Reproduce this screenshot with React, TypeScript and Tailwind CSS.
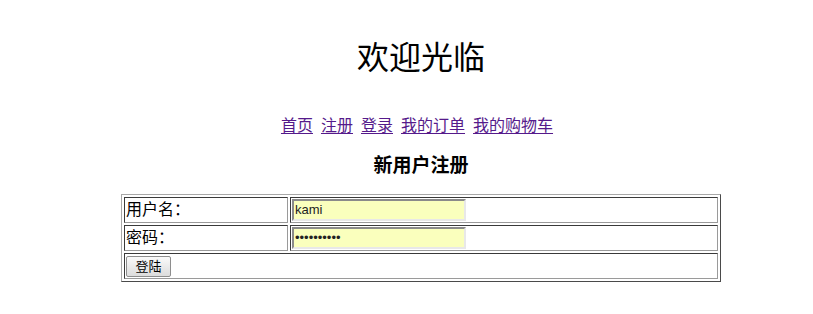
import React from 'react';

const links = ['首页', '注册', '登录', '我的订单', '我的购物车'];

const cellBorder =
  'border border-t-[#3a3a3a] border-l-[#3a3a3a] border-r-[#9a9a9a] border-b-[#9a9a9a] p-px h-[26px] align-middle';

const inputCls =
  'block w-[174px] h-[22px] bg-[#faffbd] border-2 border-t-[#8a8a8a] border-l-[#8a8a8a] border-r-[#e8e8e8] border-b-[#e8e8e8] px-[1px] text-[13px] text-[#222] outline-none';

const App: React.FC = () => {
  return (
    <div
      className="w-[842px] min-h-[314px] bg-white text-black text-center"
      style={{ fontFamily: '"Liberation Serif", "Noto Sans CJK SC", serif' }}
    >
      {/* 标题 */}
      <div className="pt-[38px] text-[32px] leading-[40px] font-normal">欢迎光临</div>

      {/* 导航 */}
      <div className="mt-[38px] text-[16px] leading-[20px] flex justify-center gap-[8px] pr-[8px]">
        {links.map((l) => (
          <a key={l} href="#" className="text-[#551a8b] underline underline-offset-2">
            {l}
          </a>
        ))}
      </div>

      <div className="mt-[19px] text-[19px] leading-[22px] font-bold">新用户注册</div>

      {/* 表单 */}
      <table className="mx-auto mt-[17px] w-[600px] border-separate border-spacing-[2px] border border-t-[#a8a8a8] border-l-[#a8a8a8] border-r-[#4a4a4a] border-b-[#4a4a4a] text-left text-[16px] leading-[22px]">
        <tbody>
          <tr>
            <td className={`${cellBorder} w-[164px]`}>用户名：</td>
            <td className={cellBorder}>
              <input
                className={inputCls}
                defaultValue="kami"
                style={{ fontFamily: '"Liberation Sans", Arial, sans-serif' }}
              />
            </td>
          </tr>
          <tr>
            <td className={cellBorder}>密码：</td>
            <td className={cellBorder}>
              <input
                type="password"
                className={inputCls}
                defaultValue="kamikamika"
                style={{ fontFamily: '"Liberation Sans", Arial, sans-serif' }}
              />
            </td>
          </tr>
          <tr>
            <td className={cellBorder} colSpan={2}>
              <button className="block w-[45px] h-[21px] text-[13px] leading-[17px] border border-[#8e8e8e] rounded-[2px] bg-gradient-to-b from-[#fafafa] to-[#dcdcdc]">
                登陆
              </button>
            </td>
          </tr>
        </tbody>
      </table>
    </div>
  );
};

export default App;
